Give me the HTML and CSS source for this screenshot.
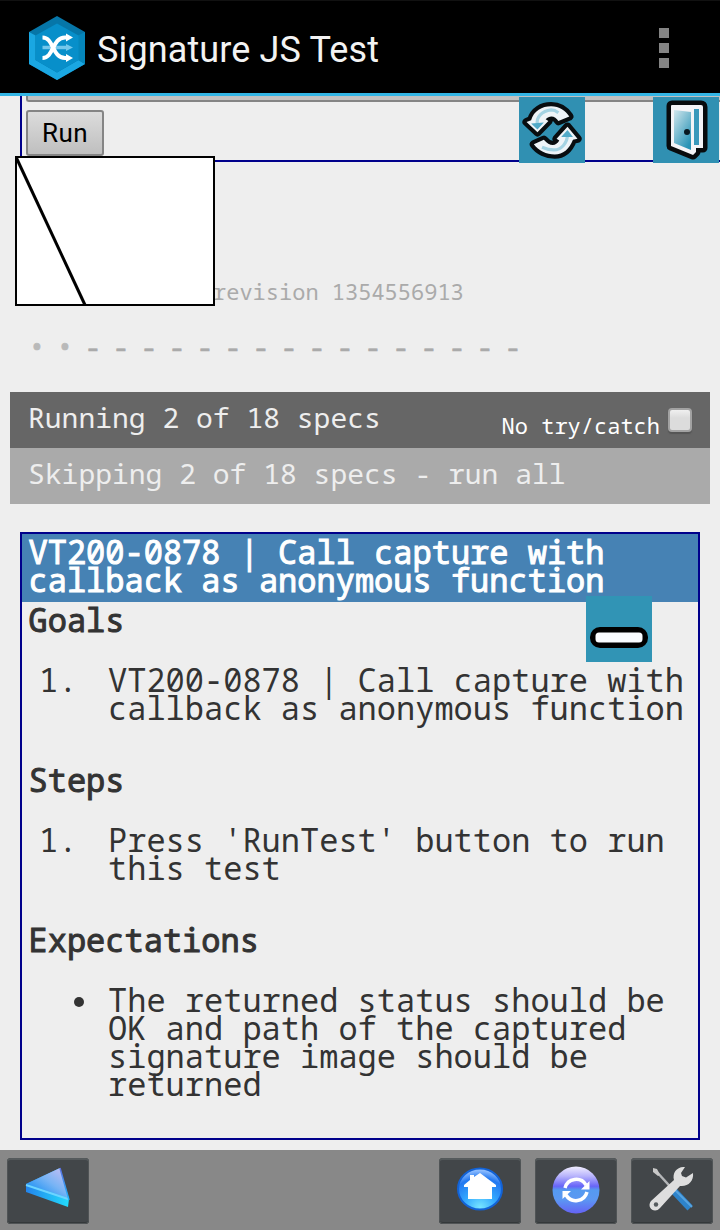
FILE: index.html
```html
<!DOCTYPE html>
<html lang="en">
<head>
<meta charset="utf-8">
<title>Signature JS Test</title>
<link rel="stylesheet" href="styles.css">
</head>
<body>
<div class="screen">
  <header class="actionbar">
    <svg class="logo" viewBox="0 0 56 64" width="56" height="64">
      <path d="M28 0 56 16V48L28 64 0 48V16z" fill="#0676a8"/>
      <path d="M0 16 6.500 19.500V44L28 56.500 49.500 44 56 48 28 64 0 48z" fill="#1aa7e2"/>
      <path d="M49 19.500 56 16V48L49 44z" fill="#0586bb"/>
      <path d="M28 7.500 49.500 19.500V44L28 56.500 6.500 44V19.500z" fill="#078fca"/>
      <path d="M13.500 31.500H37" stroke="#74c7eb" stroke-width="3.500"/>
      <path d="M37 28 44 31.500 37 35z" fill="#74c7eb"/>
      <g fill="none" stroke="#fff" stroke-width="4"><path d="M13.500 21.500C25 21.500 23 42 36 42H38"/><path d="M13.500 42C25 42 23 21.500 36 21.500H38"/></g>
      <path d="M37 17.500 44 21.500 37 25.500zM37 38 44 42 37 46z" fill="#fff"/>
    </svg>
    <h1 class="app-title">Signature JS Test</h1>
    <div class="overflow"><i></i><i></i><i></i></div>
  </header>

  <main class="page">
    <section class="controls">
      <div class="wide-button"></div>
      <button class="run">Run</button>
    </section>
    <svg class="signature" viewBox="0 0 200 150" width="200" height="150">
      <rect x="1" y="1" width="198" height="148" fill="#fff" stroke="#000" stroke-width="2"/>
      <path d="M1 1 70 149" stroke="#000" stroke-width="3"/>
    </svg>
    <svg class="tool tool-refresh" viewBox="0 0 66 66" width="66" height="66">
      <rect width="66" height="66" fill="#3090b2"/>
      <g transform="translate(3 2.700) scale(.91 .93)">
        <g stroke-linejoin="round" fill="#eef4f8">
          <path d="M5 24 10 22C13 12 22 7 32 7C41 7 48 12 52 18L40 23C37 18 31 16 26 21L29 23 17 35z" stroke="#080d10" stroke-width="9"/>
          <path d="M61 42 56 43C52 53 45 59 36 59C27 59 18 55 13 48L24 43C30 50 37 51 41 44L38 42 50 29z" stroke="#080d10" stroke-width="9"/>
          <path d="M5 24 10 22C13 12 22 7 32 7C41 7 48 12 52 18L40 23C37 18 31 16 26 21L29 23 17 35z"/>
          <path d="M61 42 56 43C52 53 45 59 36 59C27 59 18 55 13 48L24 43C30 50 37 51 41 44L38 42 50 29z"/>
        </g>
        <path d="M17 27C15 19 22 12 32 11Q36 11 40 14M50 37C50 47 43 54 35 54Q29 54 22 51" fill="none" stroke="#a4d3e3" stroke-width="3.500"/>
        <path d="M10 25.500 24 24.500 17 32zM43 40 56 40 50 32.500z" fill="#51aac8"/>
      </g>
    </svg>
    <svg class="tool tool-exit" viewBox="0 0 66 66" width="66" height="66">
      <defs><linearGradient id="door" x1="0" y1="0" x2=".7" y2="1"><stop stop-color="#d2e7ed"/><stop offset="1" stop-color="#2893b6"/></linearGradient></defs>
      <rect width="66" height="66" fill="#3090b2"/>
      <path d="M18 9Q18 8 19 8H48Q50 8 50 10V51H43V55L40 58 18 49z" fill="#f4f4f7" stroke="#080b0d" stroke-width="9" stroke-linejoin="round"/>
      <path d="M18 9Q18 8 19 8H48Q50 8 50 10V51H43V55L40 58 18 49z" fill="#f4f4f7"/>
      <path d="M21 13 38 15V53L21 46z" fill="url(#door)"/>
      <path d="M41 12H46V48H41z" fill="#3998bb"/>
      <circle cx="34" cy="35" r="3" fill="#081820"/>
    </svg>

    <p class="revision">revision 1354556913</p>
    <ul class="symbols">
      <li class="dot">•</li><li class="dot">•</li><li>-</li><li>-</li><li>-</li><li>-</li><li>-</li><li>-</li><li>-</li><li>-</li><li>-</li><li>-</li><li>-</li><li>-</li><li>-</li><li>-</li><li>-</li><li>-</li>
    </ul>
    <div class="banner running"><span>Running 2 of 18 specs</span><label class="trycatch">No try/catch<span class="checkbox"></span></label></div>
    <div class="banner skipping">Skipping 2 of 18 specs - run all</div>

    <section class="spec">
      <h2 class="spec-title">VT200-0878 | Call capture with callback as anonymous function</h2>
      <div class="spec-body">
        <h3>Goals</h3>
        <div class="item"><span class="marker">1.</span><p>VT200-0878 | Call capture with callback as anonymous function</p></div>
        <h3>Steps</h3>
        <div class="item"><span class="marker">1.</span><p>Press 'RunTest' button to run this test</p></div>
        <h3>Expectations</h3>
        <div class="item"><span class="bullet"></span><p>The returned status should be OK and path of the captured signature image should be returned</p></div>
      </div>
      <svg class="tool tool-collapse" viewBox="0 0 66 66" width="66" height="66">
        <rect width="66" height="66" fill="#3194b5"/>
        <rect x="4" y="31" width="58" height="21" rx="10" fill="#000"/>
        <rect x="9.500" y="36.500" width="47" height="10" rx="3.500" fill="#fafcff"/>
      </svg>
    </section>
  </main>

  <footer class="toolbar">
    <div class="key back"><svg viewBox="0 0 82 66" width="82" height="66">
      <defs><linearGradient id="top" x1=".9" y1="0" x2=".1" y2=".8"><stop stop-color="#c4bff5"/><stop offset=".5" stop-color="#78b4f5"/><stop offset="1" stop-color="#168ff3"/></linearGradient><linearGradient id="edge"><stop stop-color="#2484ed"/><stop offset="1" stop-color="#22dcfb"/></linearGradient><linearGradient id="side" x1="0" y1="0" x2="0" y2="1"><stop stop-color="#5b6fe0"/><stop offset="1" stop-color="#22b4fb"/></linearGradient></defs>
      <path d="M19 26 53 10 62 41 61 49 19 34z" fill="url(#edge)"/><path d="M19 26 53 10 61 40z" fill="url(#top)"/><path d="M19 27 61 41" stroke="#6dd4ff" stroke-width="2"/><path d="M53 10 62 42" stroke="url(#side)" stroke-width="1.500"/>
    </svg></div>
    <div class="key"><svg viewBox="0 0 82 66" width="82" height="66">
      <defs><radialGradient id="home" cx=".5" cy=".95" r=".9"><stop stop-color="#78e6ff"/><stop offset=".4" stop-color="#35aaff"/><stop offset=".8" stop-color="#2378f0"/><stop offset="1" stop-color="#8cbcff"/></radialGradient></defs>
      <ellipse cx="41" cy="31" rx="22" ry="20.500" fill="url(#home)" stroke="#1262d6" stroke-width="2"/><path d="M41 15 57 27V29H53V41H29V29H25V27L31 22V17H35V19z" fill="#fff"/>
    </svg></div>
    <div class="key"><svg viewBox="0 0 82 66" width="82" height="66">
      <defs><linearGradient id="sync" x1="0" y1="0" x2="0" y2="1"><stop stop-color="#f0edff"/><stop offset=".2" stop-color="#b9b5fc"/><stop offset=".42" stop-color="#6864f8"/><stop offset=".5" stop-color="#559af0"/><stop offset=".7" stop-color="#5b98f2"/><stop offset="1" stop-color="#6562f5"/></linearGradient></defs>
      <circle cx="41" cy="32" r="23.500" fill="url(#sync)"/><path d="M30 30A11.500 11.500 0 0 1 51 27M52 34A11.500 11.500 0 0 1 31 37" fill="none" stroke="#fff" stroke-width="3.500"/><path d="M54.500 23V31.500H46zM27.500 41V33H36z" fill="#fff"/>
    </svg></div>
    <div class="key"><svg viewBox="0 0 82 66" width="82" height="66">
      <path d="M25 13 45 35" stroke="#b4b6b8" stroke-width="2.500"/><path d="M22 10 26 11 29 17 27 18 22 14z" fill="#c8c8c8"/><path d="M43 33 59 50" stroke="#2d83ca" stroke-width="7"/><path d="M44 32 61 49" stroke="#55a3df" stroke-width="2"/>
      <path d="M54 9C46 8 41 15 43 22L20 43C15 50 24 56 29 50L49 28C57 29 63 23 62 15L55 19.500 51 18 50 15z" fill="#dedede"/><circle cx="25" cy="46.500" r="2.200" fill="#555b5e"/>
    </svg></div>
  </footer>
</div>
</body>
</html>
```
FILE: styles.css
```css
* { box-sizing: border-box; }
body { margin: 0; background: #eee; }
h1, h2, h3, p, ul { margin: 0; padding: 0; font-weight: normal; }
.screen { width: 720px; height: 1230px; display: flex; flex-direction: column; overflow: hidden; background: #eee; font-family: "Droid Sans Mono", "Noto Sans Mono", "DejaVu Sans Mono", monospace; }
.actionbar { height: 96px; flex: none; display: flex; align-items: center; padding: 1px 51px 0 29px; background: #000; border-top: 1px solid #111; border-bottom: 3px solid #33b5e5; }
.logo { display: block; }
.app-title { margin: 5px 0 0 12px; color: #f3f3f3; font: 36px/42px Roboto, sans-serif; letter-spacing: .13px; white-space: nowrap; }
.overflow { margin-left: auto; display: grid; gap: 5px; }
.overflow i { width: 10px; height: 10px; background: #848484; }
.page { position: relative; flex: 1; padding: 0 10px; }
.controls { height: 66px; margin-left: 10px; padding-left: 4px; border: solid #00008b; border-width: 0 0 2px 2px; margin-right: -10px; }
.wide-button { height: 6px; background: #c1c1c1; border: solid #848484; border-width: 0 0 2px 2px; border-radius: 0 0 0 3px; }
.run { display: block; width: 78px; height: 46px; margin-top: 8px; padding: 0; border: 2px solid #858585; border-radius: 3px; background: linear-gradient(#dcdcdc, #bfbfbf); color: #000; font: 26px/42px Roboto, sans-serif; letter-spacing: .5px; }
.signature { position: absolute; left: 15px; top: 60px; }
.tool { position: absolute; display: block; }
.tool-refresh { left: 519px; top: 1px; }
.tool-exit { left: 653px; top: 1px; }
.revision { margin: 115px 0 0 203px; font-size: 22px; line-height: 28px; letter-spacing: 0; color: #aaa; }
.symbols { display: flex; list-style: none; margin: 27px 0 0 13px; height: 28px; font-size: 28px; line-height: 28px; color: #aaa; }
.symbols li { width: 28px; text-align: center; -webkit-text-stroke: .7px; }
.symbols .dot { color: #b9b9b9; }
.banner { height: 56px; padding: 0 18px; font-size: 28px; line-height: 50px; color: #eee; white-space: pre; }
.running { margin-top: 32px; display: flex; justify-content: space-between; background: #666; }
.skipping { background: #aaa; }
.trycatch { display: flex; gap: 8px; font-size: 22px; line-height: 67px; color: #fff; }
.checkbox { width: 24px; height: 24px; margin-top: 16px; border: 2px solid #a2a2a2; border-radius: 4px; background: linear-gradient(#f0f0f0, #dcdcdc 40%); box-shadow: 0 2px 1px #555; }
.spec { position: relative; height: 608px; margin: 28px 10px 0; border: 2px solid #00008b; font-size: 32px; line-height: 28px; color: #333; }
.spec-title { height: 68px; padding: 4px 6px; font-size: 32px; background: #4682b4; color: #fff; -webkit-text-stroke: 1px #fff; text-indent: 0; }
.spec-body { padding: 4px 6px; }
.spec-body h3 { font-size: 32px; -webkit-text-stroke: 1px #333; }
.spec-title, .spec-body h3 { padding-left: 6.5px; }
.spec-body h3 { padding-left: .5px; }
.item { display: grid; grid-template-columns: 80px 1fr; margin: 32px -6px 44px 0; }
.marker { padding-left: 11px; }
.bullet { width: 10px; height: 10px; margin: 11px 0 0 46px; border-radius: 50%; background: #333; }
.tool-collapse { left: 564px; top: 62px; }
.toolbar { height: 80px; flex: none; display: flex; gap: 14px; padding: 8px 7px 0; background: #888; }
.key { width: 82px; height: 66px; border-radius: 4px; background: #424649; box-shadow: inset 0 2px 0 #555a5c, inset 0 0 0 1px #505456, inset 0 -2px 0 #34383a; }
.key svg { display: block; }
.back { margin-right: auto; }
```
